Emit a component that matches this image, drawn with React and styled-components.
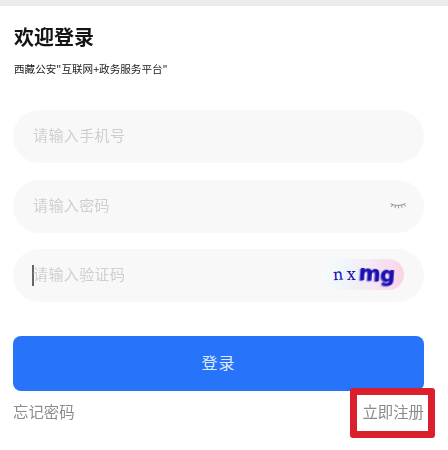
import React from "react";
import styled, { createGlobalStyle } from "styled-components";

const Global = createGlobalStyle`
  html, body { margin: 0; padding: 0; background: #fff; }
  body { font-family: "Noto Sans CJK SC", "Liberation Sans", sans-serif; }
`;
const Page = styled.div`
  position: relative; width: 448px; height: 450px; overflow: hidden;
  background: #fff; display: flex; flex-direction: column;
`;
const TopStrip = styled.div`height: 6px; background: #ebebeb; flex: none;`;
const Content = styled.main`
  padding: 17px 24px 0 13px; display: flex; flex-direction: column;
`;
const Title = styled.h1`
  margin: 0 0 0 1px; font-size: 20px; line-height: 28px; font-weight: 700; color: #141414;
  filter: blur(0.4px);
`;
const Subtitle = styled.p`
  margin: 10px 0 0 1px; font-size: 10.6px; line-height: 15px; color: #222; filter: blur(0.4px);
`;
const Fields = styled.div`
  margin-top: 34px; display: flex; flex-direction: column; gap: 16.5px;
`;
const Field = styled.div`
  height: 53px; border-radius: 27px; background: #f8f8f8; padding: 0 19px 0 20px;
  display: flex; align-items: center; justify-content: space-between; position: relative;
`;
const Placeholder = styled.span`
  font-size: 15px; letter-spacing: 0.4px; color: #cfcfcf; filter: blur(0.5px);
  margin-bottom: 4px;
`;
const Caret = styled.span`
  position: absolute; left: 19px; top: 16px; width: 1.5px; height: 21px; background: #666;
`;
const Eye = styled.svg`width: 18px; height: 10px; margin-right: -2px; filter: blur(0.3px);`;
const Captcha = styled.div`
  width: 82px; height: 31px; border-radius: 16px; margin-left: auto;
  transform: translate(-1px, -1px);
  background: linear-gradient(90deg, #f8fafb 0%, #eff6f9 25%, #f3e9f4 60%, #fbd2e6 100%);
  display: flex; align-items: center; justify-content: center; gap: 3px; padding-left: 2px;
  box-sizing: border-box; font-family: "DejaVu Serif", "Liberation Serif", serif;
  color: #1a10b0; filter: blur(0.7px);
`;
const CaptchaSmall = styled.span`font-size: 16px; line-height: 1; transform: rotate(${p => p.$r}deg);`;
const CaptchaBig = styled.span`
  font-family: "DejaVu Sans", sans-serif; font-weight: 700; font-size: 21px; line-height: 1;
  letter-spacing: -0.5px; transform: rotate(4deg);
  text-shadow: -1px 1px 1px #5a50d0;
`;
const Submit = styled.button`
  margin-top: 34px; height: 55px; border: none; border-radius: 8px; background: #2774fb;
  color: #dfeaff; font: inherit; font-size: 16px; letter-spacing: 1px; padding: 0 0 3px;
`;
const Links = styled.div`
  margin-top: 11px; display: flex; justify-content: space-between; align-items: center;
  font-size: 15.4px; line-height: 19px; color: #8b8b8b;
`;
const LinkText = styled.span`filter: blur(0.4px);`;
const Highlight = styled.div`
  position: absolute; left: 350px; top: 388px; width: 85px; height: 50px; box-sizing: border-box;
  border: 7px solid #dc1f2c; border-radius: 3px; pointer-events: none;
`;

export default function App() {
  return (
    <Page>
      <Global />
      <TopStrip />
      <Content>
        <Title>欢迎登录</Title>
        <Subtitle>西藏公安"互联网+政务服务平台"</Subtitle>
        <Fields>
          <Field><Placeholder>请输入手机号</Placeholder></Field>
          <Field>
            <Placeholder>请输入密码</Placeholder>
            <Eye viewBox="0 0 18 10" fill="none" stroke="#777" strokeWidth="0.8">
              <path d="M1.5 2.5C5 5 12 5 16.5 2.5" />
              <path d="M3.5 3.6L2.5 6M6.5 4.4L6 7M9.5 4.6V7.4M12.5 4.2L13 6.8M15 3.2L16.5 5.5" />
            </Eye>
          </Field>
          <Field>
            <Caret />
            <Placeholder>请输入验证码</Placeholder>
            <Captcha>
              <CaptchaSmall $r={-4}>n</CaptchaSmall>
              <CaptchaSmall $r={0}>x</CaptchaSmall>
              <CaptchaBig>mg</CaptchaBig>
            </Captcha>
          </Field>
        </Fields>
        <Submit>登录</Submit>
        <Links>
          <LinkText>忘记密码</LinkText>
          <LinkText>立即注册</LinkText>
        </Links>
      </Content>
      <Highlight />
    </Page>
  );
}
